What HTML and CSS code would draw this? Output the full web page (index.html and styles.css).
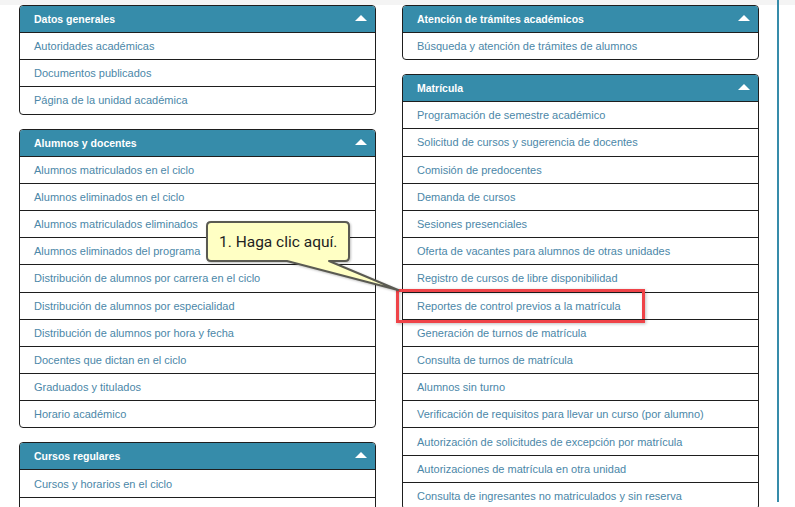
FILE: index.html
```html
<!DOCTYPE html>
<html lang="es">
<head>
  <meta charset="UTF-8">
  <meta name="viewport" content="width=device-width, initial-scale=1.0">
  <title>Reportes</title>
  <link rel="stylesheet" href="styles.css">
</head>
<body>

  <div class="topbar"></div>
  <div class="page">
    <div class="columns">
      <div class="column">
        <div class="panel">
          <div class="panel-head">Datos generales <span class="caret"></span></div>
          <a class="item" href="#">Autoridades académicas</a>
          <a class="item" href="#">Documentos publicados</a>
          <a class="item" href="#">Página de la unidad académica</a>
        </div>
        <div class="panel">
          <div class="panel-head">Alumnos y docentes <span class="caret"></span></div>
          <a class="item" href="#">Alumnos matriculados en el ciclo</a>
          <a class="item" href="#">Alumnos eliminados en el ciclo</a>
          <a class="item" href="#">Alumnos matriculados eliminados</a>
          <a class="item" href="#">Alumnos eliminados del programa</a>
          <a class="item" href="#">Distribución de alumnos por carrera en el ciclo</a>
          <a class="item" href="#">Distribución de alumnos por especialidad</a>
          <a class="item" href="#">Distribución de alumnos por hora y fecha</a>
          <a class="item" href="#">Docentes que dictan en el ciclo</a>
          <a class="item" href="#">Graduados y titulados</a>
          <a class="item" href="#">Horario académico</a>
        </div>
        <div class="panel">
          <div class="panel-head">Cursos regulares <span class="caret"></span></div>
          <a class="item" href="#">Cursos y horarios en el ciclo</a>
          <a class="item" href="#">Estadísticas de cursos en el ciclo</a>
        </div>
      </div>

      <div class="column">
        <div class="panel">
          <div class="panel-head">Atención de trámites académicos <span class="caret"></span></div>
          <a class="item" href="#">Búsqueda y atención de trámites de alumnos</a>
        </div>
        <div class="panel">
          <div class="panel-head">Matrícula <span class="caret"></span></div>
          <a class="item" href="#">Programación de semestre académico</a>
          <a class="item" href="#">Solicitud de cursos y sugerencia de docentes</a>
          <a class="item" href="#">Comisión de predocentes</a>
          <a class="item" href="#">Demanda de cursos</a>
          <a class="item" href="#">Sesiones presenciales</a>
          <a class="item" href="#">Oferta de vacantes para alumnos de otras unidades</a>
          <a class="item" href="#">Registro de cursos de libre disponibilidad</a>
          <a class="item" href="#">Reportes de control previos a la matrícula<span class="highlight"></span></a>
          <a class="item" href="#">Generación de turnos de matrícula</a>
          <a class="item" href="#">Consulta de turnos de matrícula</a>
          <a class="item" href="#">Alumnos sin turno</a>
          <a class="item" href="#">Verificación de requisitos para llevar un curso (por alumno)</a>
          <a class="item" href="#">Autorización de solicitudes de excepción por matrícula</a>
          <a class="item" href="#">Autorizaciones de matrícula en otra unidad</a>
          <a class="item" href="#">Consulta de ingresantes no matriculados y sin reserva</a>
        </div>
      </div>
    </div>
    <div class="side-line"></div>
  </div>

  <!-- callout pointing to the highlighted row -->
  <div class="callout">
    <svg class="callout-shape" width="200" height="80" viewBox="0 0 200 80">
      <path d="M5 4 H139 Q143 4 143 8 V39 Q143 43 139 43 H123 L192 72 L81 43 H5 Q1 43 1 39 V8 Q1 4 5 4 Z"
            fill="#ffffc4" stroke="#5a5a52" stroke-width="2" stroke-linejoin="round"/>
    </svg>
    <span class="callout-text">1. Haga clic aquí.</span>
  </div>

</body>
</html>
```

FILE: styles.css
```css
body {
  margin: 0;
  padding: 0;
  font-family: "Liberation Sans", Arial, sans-serif;
  background-color: #fff;
  overflow: hidden;
}
.topbar {
  height: 5px;
  background-color: #f4f4f4;
}
.page {
  display: flex;
  padding-left: 19px;
}
.columns {
  display: grid;
  grid-template-columns: 357px 357px;
  column-gap: 26px;
  align-items: start;
}
.column {
  display: flex;
  flex-direction: column;
  gap: 14px;
}
.panel {
  border: 1px solid #1e1e1e;
  border-radius: 4px;
  background: #fff;
}
.panel-head {
  display: flex;
  justify-content: space-between;
  align-items: center;
  height: 26px;
  padding: 0 8px 0 14px;
  background-color: #368caa;
  border-bottom: 1px solid #1e1e1e;
  border-radius: 3px 3px 0 0;
  color: #fff;
  font-size: 10.5px;
  font-weight: bold;
}
.caret {
  width: 0;
  height: 0;
  border-left: 6px solid transparent;
  border-right: 6px solid transparent;
  border-bottom: 6px solid #fff;
  margin-top: -2px;
}
.item {
  position: relative;
  display: flex;
  align-items: center;
  height: 26.2px;
  padding-left: 14px;
  border-top: 1px solid #1e1e1e;
  color: #4b87a8;
  font-size: 11px;
  text-decoration: none;
}
.panel-head + .item {
  border-top: none;
}
.highlight {
  position: absolute;
  left: -7px;
  top: -4px;
  width: 243px;
  height: 28px;
  border: 3px solid #ef4348;
  box-shadow: 1px 1px 3px rgba(0, 0, 0, 0.25), inset 1px 1px 3px rgba(0, 0, 0, 0.2);
}
.side-line {
  width: 2px;
  height: 502px;
  margin-left: 18px;
  margin-top: -5px;
  background-color: #368caa;
}
.callout {
  position: absolute;
  left: 206px;
  top: 218px;
  width: 200px;
  height: 80px;
}
.callout-shape {
  display: block;
  filter: drop-shadow(1px 1px 1px rgba(0, 0, 0, 0.25));
}
.callout-text {
  position: absolute;
  left: 13px;
  top: 15px;
  font-family: Roboto, "Liberation Sans", sans-serif;
  font-size: 15.5px;
  color: #222;
}
```
